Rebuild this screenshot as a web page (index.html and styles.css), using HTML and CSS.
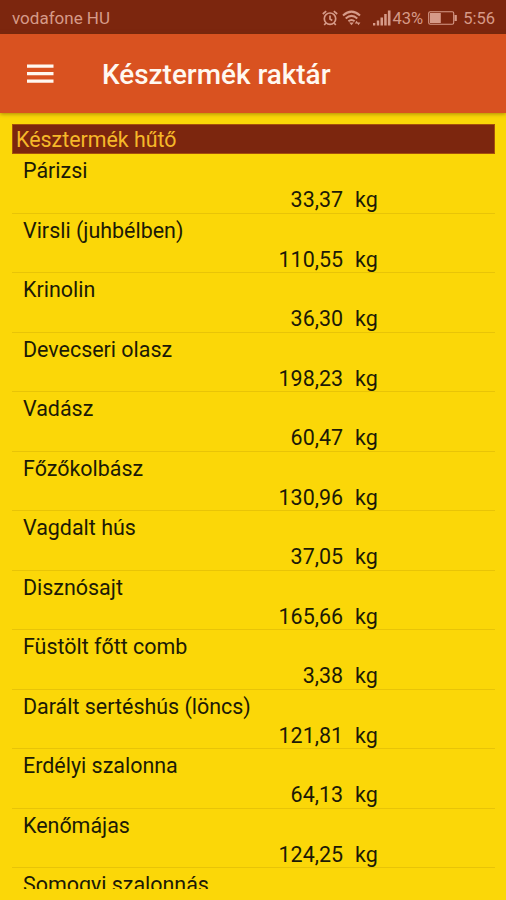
FILE: index.html
```html
<!DOCTYPE html>
<html lang="hu">
<head>
<meta charset="utf-8">
<title>Késztermék raktár</title>
<link rel="stylesheet" href="styles.css">
</head>
<body>
<div class="status">
  <span class="carrier">vodafone HU</span>
  <svg class="alarm" viewBox="0 0 16 16" width="16" height="16" fill="none" stroke="currentColor" stroke-width="1.7"><circle cx="8" cy="8.7" r="5.7"/><path d="M8 5.4v3.6l2.3 1.4M.8 4l3.4-2.8M15.2 4l-3.4-2.8M4 13l-1.8 2M12 13l1.8 2"/></svg>
  <svg class="wifi" viewBox="0 0 20 16" width="20" height="16" fill="none" stroke="currentColor" stroke-width="2"><path d="M1 5.4Q9.5-2.2 18 5.4M3.7 8.4q5.8-5 11.6 0M6.4 11.2q3.1-2.5 6.2 0"/><path d="M7.2 12.5h4.6l-2.3 2.7z" fill="currentColor" stroke="none"/><path d="M12.8 13.4l1.8-2.6 1.8 2.6zM14.6 12.5h3.8l-1.9 2.8z" fill="currentColor" stroke="none"/></svg>
  <svg class="signal" viewBox="0 0 18 16" width="18" height="16" fill="currentColor"><path d="M0 13h2.3v2.5H0zM3.8 10.5h2.4v5H3.8zM7.5 7.5H10v8H7.5zM11.2 4h2.5v11.5h-2.5zM14.9.5h2.6v15h-2.6z"/></svg>
  <span class="percent">43%</span>
  <svg class="battery" viewBox="0 0 30 14" width="30" height="14"><rect x=".7" y=".7" width="25" height="12.6" rx="1.5" fill="none" stroke="currentColor" stroke-width="1.1"/><path d="M2 2h10.8v10H2zM26.5 4h2.3v6h-2.3z" fill="currentColor"/></svg>
  <span class="clock">5:56</span>
</div>
<header class="bar">
  <svg class="menu" viewBox="0 0 27 20" width="27" height="20" fill="#fff8f0"><path d="M0 .5h26.5v3.3H0zM0 8h26.5v3.3H0zM0 15.5h26.5v3.3H0z"/></svg>
  <h1>Késztermék raktár</h1>
</header>
<main class="list">
  <h2>Késztermék hűtő</h2>
  <ul>
    <li><p>Párizsi</p><div class="qty"><span>33,37</span><span>kg</span></div></li>
    <li><p>Virsli (juhbélben)</p><div class="qty"><span>110,55</span><span>kg</span></div></li>
    <li><p>Krinolin</p><div class="qty"><span>36,30</span><span>kg</span></div></li>
    <li><p>Devecseri olasz</p><div class="qty"><span>198,23</span><span>kg</span></div></li>
    <li><p>Vadász</p><div class="qty"><span>60,47</span><span>kg</span></div></li>
    <li><p>Főzőkolbász</p><div class="qty"><span>130,96</span><span>kg</span></div></li>
    <li><p>Vagdalt hús</p><div class="qty"><span>37,05</span><span>kg</span></div></li>
    <li><p>Disznósajt</p><div class="qty"><span>165,66</span><span>kg</span></div></li>
    <li><p>Füstölt főtt comb</p><div class="qty"><span>3,38</span><span>kg</span></div></li>
    <li><p>Darált sertéshús (löncs)</p><div class="qty"><span>121,81</span><span>kg</span></div></li>
    <li><p>Erdélyi szalonna</p><div class="qty"><span>64,13</span><span>kg</span></div></li>
    <li><p>Kenőmájas</p><div class="qty"><span>124,25</span><span>kg</span></div></li>
    <li><p>Somogyi szalonnás</p></li>
  </ul>
</main>
</body>
</html>
```

FILE: styles.css
```css
* { box-sizing: border-box; margin: 0; padding: 0; }
body {
  width: 506px;
  height: 900px;
  overflow: hidden;
  background: #fbd708;
  color: #1c1a06;
  font-family: Roboto, "Liberation Sans", sans-serif;
}
.status {
  display: flex;
  align-items: center;
  height: 34px;
  padding: 2px 11px 0 12px;
  background: #7c260e;
  color: #d69a88;
  font-size: 16.5px;
}
.carrier { flex: 1; font-size: 17px; }
.wifi { margin-left: 4px; }
.signal { margin-left: 11px; }
.percent { margin-left: 2px; }
.battery { margin-left: 5px; }
.clock { margin-left: 5px; }
.bar {
  display: flex;
  align-items: center;
  height: 79px;
  padding: 0 26px 0 27px;
  background: #d95220;
  box-shadow: 0 1px 4px rgba(90, 60, 0, .5);
}
.bar h1 {
  margin: 2px 0 0 48px;
  color: #fff8f0;
  font-size: 27.9px;
  font-weight: 500;
}
.list {
  height: 765px;
  margin: 11px 11px 0 12px;
  overflow: hidden;
}
.list h2 {
  height: 30px;
  padding-left: 3px;
  border: 1px solid #a5510c;
  background: #7c260e;
  color: #f5b829;
  font-size: 21.4px;
  font-weight: 400;
  line-height: 29px;
}
.list ul { list-style: none; }
.list li {
  height: 59.5px;
  padding-left: 11px;
  border-bottom: 1px solid #e8c407;
  font-size: 21.45px;
  line-height: 29px;
}
.list li p { padding-top: 2px; }
.qty {
  display: grid;
  grid-template-columns: 320px auto;
  column-gap: 12px;
}
.qty span:first-child { text-align: right; }
```
